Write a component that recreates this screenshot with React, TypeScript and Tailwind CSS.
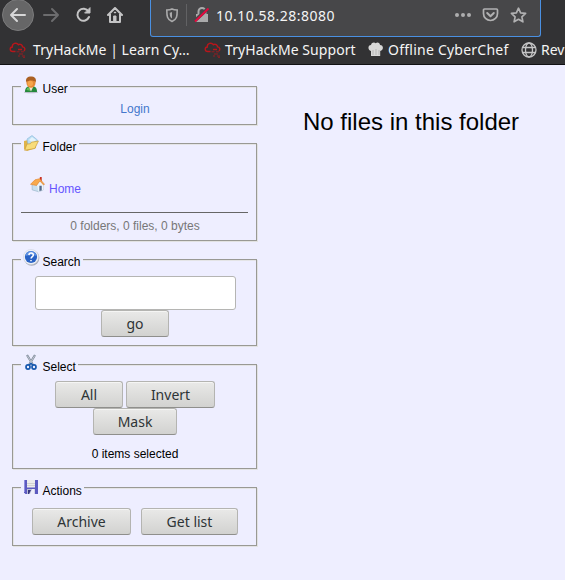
import React from "react";

const RedCloud = () => (
  <svg width="18" height="18" viewBox="0 0 18 18" fill="none" stroke="#b8161b" strokeWidth="1.4">
    <path d="M6.5 10.5H3.8C.4 10.5.5 6.2 3.3 6 3 2.300 7.500 1 9.300 3.700c2-1.300 4.300.1 4.200 2.200 2.500.1 3 2.600 1.500 4.100M9 8.500h4" />
    <path d="M7.500 10.800h3m1.500 0h3M10 13h4m-5 2h2m2 0h3M14 16.300h2" strokeWidth="1" opacity=".75" />
  </svg>
);

const UserIcon = () => (
  <svg width="16" height="18" viewBox="0 0 16 18">
    <ellipse cx="8" cy="16.300" rx="7" ry="1" fill="#b9bdc9" />
    <path d="M2 16c0-4 2-5.500 4-5.500h4c2.500 0 4 1.500 4 5.500z" fill="#25883b" />
    <path d="M3.500 14c.3-2 1.200-2.700 2.500-2.700L8 15z" fill="#63bd5b" />
    <path d="M5.700 10.500 8 15.500l2.400-5z" fill="#f7e5d0" />
    <ellipse cx="8" cy="6.500" rx="4.600" ry="5.200" fill="#e48a35" />
    <path d="M3 6C2.700 1.800 5 .6 8 .6s5.300 1.200 5 5.400c-2.700-2-7.100-2-10 0z" fill="#ab6022" />
    <ellipse cx="7.300" cy="7.500" rx="2.700" ry="2.800" fill="#f6a54c" />
  </svg>
);

const FolderIcon = () => (
  <svg width="16" height="18" viewBox="0 0 16 18">
    <path d="m1 6 4-1 1 1 6-2 1 9-9 3-3-2z" fill="#dfb34b" />
    <path d="m4 4 5-3.500L14.500 5 11 11 5 10z" fill="#b9dcf3" stroke="#87b7d7" strokeWidth=".6" />
    <path d="m6 5 3-3 4 3-3 3z" fill="#e4f3fc" />
    <path d="m1.700 15.300 2.200-6.200 3.500-.4 1-1.500 7-1.200-3.600 7.500z" fill="#f8dc7b" stroke="#c99c38" strokeWidth=".7" />
  </svg>
);

const HouseIcon = () => (
  <svg className="ml-px mt-px" width="15" height="16" viewBox="0 0 16 17">
    <path d="M10.500 0h2v5h-2z" fill="#c92e20" />
    <path d="m2.200 8 4.500-3L14 7.500v6.300l-4.700 1.900-7-2z" fill="#c9e0f0" stroke="#91adc2" strokeWidth=".6" />
    <path d="m7.500 8 3.200-4.400 3.500 4.500v5.600L9 15.600z" fill="#edf5fa" />
    <path d="M.5 7.800 5.300 3l5-1.300 5.200 6.100-1 .7-4-4.300L7 9z" fill="#f8aa4d" stroke="#df7c28" strokeWidth=".6" />
    <path d="M10 9.300h2.500v5L10 15z" fill="#53698b" />
  </svg>
);

const HelpIcon = () => (
  <svg width="18" height="18" viewBox="0 0 18 18">
    <circle cx="8.700" cy="9" r="7.700" fill="#a9adb9" />
    <circle cx="8" cy="8" r="7.600" fill="#eef0f5" stroke="#cdd1dc" strokeWidth=".5" />
    <circle cx="8" cy="8" r="6.100" fill="#2962c5" />
    <path d="M2.500 7C3 3.500 5 2.200 8 2.200s5 1.600 5.500 4.800C10 5.500 6 6 2.500 7z" fill="#5d91e3" />
    <path d="M5.900 6.100c.2-3 4.700-2.600 4.400 0-.1 1.500-2.200 1.500-2.200 3.400M8 10.900v1.400" fill="none" stroke="#fff" strokeWidth="1.500" />
  </svg>
);

const ScissorsIcon = () => (
  <svg width="16" height="18" viewBox="0 0 16 18" fill="none">
    <path d="m4 1 6 10M12 1 6 11" stroke="#7e8999" strokeWidth="2.200" />
    <path d="m4.200 1.500 5.500 9M11.800 1.500l-5.500 9" stroke="#d2d7df" strokeWidth=".8" />
    <ellipse cx="5" cy="13" rx="2" ry="2.200" stroke="#1758ae" strokeWidth="1.700" />
    <ellipse cx="11" cy="13" rx="2" ry="2.200" stroke="#1758ae" strokeWidth="1.700" />
    <path d="m6 11 2-1.500 2 1.500" stroke="#1758ae" strokeWidth="1.500" />
  </svg>
);

const DiskIcon = () => (
  <svg width="16" height="16" viewBox="0 0 16 16">
    <path d="M0 0h14v14H1.500L0 12.500z" fill="#5c5ac0" />
    <path d="M0 0h1v12H0z" fill="#8f8ee0" />
    <path d="M3 0h8v7.500H3z" fill="#ececec" />
    <path d="M3 3h8v1H3zM3 5h8v1H3z" fill="#d2d2d2" />
    <path d="M3 9h8v5H3z" fill="#b9bcd6" />
    <path d="M4 10h3l-2 4H4z" fill="#36367c" />
    <path d="M8 9h2.500v5H6z" fill="#eeeefa" />
  </svg>
);

type PanelProps = { title: string; icon: React.ReactNode; box: string; titlePad?: string; children: React.ReactNode };

const Panel = ({ title, icon, box, titlePad = "pt-[6px]", children }: PanelProps) => (
  <section className={`w-[245px] border border-[#999994] shadow-[1px_1px_0_#e2e2e2,inset_1px_1px_0_#e4e4e6] px-2 ${box}`}>
    <h2 className="-mt-[11px] flex h-[22px] w-fit bg-[#eeeeff] pr-[2px] text-[12px] leading-[14px]">
      <span className="w-[21.500px] shrink-0 pl-[2px]">{icon}</span>
      <span className={titlePad}>{title}</span>
    </h2>
    {children}
  </section>
);

const Button = ({ label, size }: { label: string; size: string }) => (
  <button
    className={`flex h-[27px] items-center justify-center rounded-[3px] border border-[#b4b4b1] border-b-[#8f8f8c] bg-linear-to-b from-[#e9e9e8] to-[#d2d2d0] font-['Noto_Sans',sans-serif] text-[14px] leading-[20px] text-[#2e3436] shadow-[inset_0_1px_0_#f5f5f4] ${size}`}
  >
    {label}
  </button>
);

export default function App() {
  return (
    <div className="h-[580px] w-[565px] overflow-hidden bg-[#eeeeff] font-['Liberation_Sans',Arial,sans-serif] text-[12px] text-black">
      <header className="h-[65px] border-b border-[#111113] bg-[#323234] font-['Noto_Sans',sans-serif] text-[#f5f5f5]">
        <div className="flex h-[37px] text-[#c4c4c5]">
          <div className="flex w-[150px] shrink-0">
            <div className="-mt-[1px] ml-[2px] flex size-8 shrink-0 items-center justify-center rounded-full border border-[#7b7b7c] bg-[#666667]">
              <svg width="18" height="16" viewBox="0 0 18 16" fill="none" stroke="#d7d7d8" strokeWidth="2" strokeLinecap="round" strokeLinejoin="round">
                <path d="M16 8H2m6-6L2 8l6 6" />
              </svg>
            </div>
            <svg className="mt-[7px] ml-[8px]" width="18" height="16" viewBox="0 0 18 16" fill="none" stroke="#6c6c6e" strokeWidth="2" strokeLinecap="round" strokeLinejoin="round">
              <path d="M2 8h14m-6-6 6 6-6 6" />
            </svg>
            <svg className="mt-[7px] ml-[15px]" width="17" height="16" viewBox="0 0 17 16" fill="none" stroke="currentColor" strokeWidth="2" strokeLinecap="round">
              <path d="M13.500 4.500A6 6 0 1 0 14 10" />
              <path d="M15 1v5h-5z" fill="currentColor" strokeWidth="1" strokeLinejoin="round" />
            </svg>
            <svg className="mt-[7px] ml-[14px]" width="18" height="16" viewBox="0 0 18 16" fill="none" stroke="currentColor" strokeWidth="2" strokeLinecap="round" strokeLinejoin="round">
              <path d="m2 8 7-7 7 7M4 7v8h10V7" />
              <path d="M8 9h2v6H8z" fill="currentColor" strokeWidth="1" />
              <path d="M8.500 5.500h1" strokeWidth="1.500" />
            </svg>
          </div>
          <div className="flex w-[391px] shrink-0 rounded-b-[3px] border border-t-0 border-[#4a90e2] bg-[#474749]">
            <svg className="mt-[8px] ml-[14px] shrink-0" width="14" height="15" viewBox="0 0 14 15" fill="none" stroke="#aaaaab" strokeWidth="1.600">
              <path d="M7 1c2 1 3.600 1 5.200 1 0 6-.2 9.300-5.200 11.500C2 11.300 1.800 8 1.800 2 3.400 2 5 2 7 1z" />
              <path d="M7 4v6.500C5 9 4.700 7.500 4.700 4.700 5.600 4.600 6.300 4.400 7 4z" fill="#aaaaab" stroke="none" />
            </svg>
            <span className="mt-1 ml-[7px] h-[22px] w-px shrink-0 bg-[#626264]" />
            <svg className="mt-[7px] ml-[7px] shrink-0" width="16" height="16" viewBox="0 0 16 16" fill="none">
              <path d="M4.500 7V4.500a3.500 3.500 0 0 1 7 0V7" stroke="#aaaaab" strokeWidth="2" />
              <path d="M2 7h12v8H2z" fill="#aaaaab" />
              <path d="m1 13.500 13-12" stroke="#474749" strokeWidth="3.500" />
              <path d="M1 14.500 14.500 1.500" stroke="#e5083e" strokeWidth="1.900" />
            </svg>
            <span className="mt-[6px] ml-[6px] w-[237px] shrink-0 text-[14px] leading-5 tracking-[0.5px] text-[#f5f5f5]">10.10.58.28:8080</span>
            <svg className="mt-[7px] ml-px shrink-0" width="18" height="16" viewBox="0 0 18 16" fill="#adadae">
              <circle cx="3" cy="8" r="2" /><circle cx="9" cy="8" r="2" /><circle cx="15" cy="8" r="2" />
            </svg>
            <svg className="mt-[7px] ml-[10px] shrink-0" width="17" height="16" viewBox="0 0 17 16" fill="none" stroke="#b1b1b2" strokeWidth="2" strokeLinecap="round" strokeLinejoin="round">
              <path d="M2.500 2h12q1 0 1 1v3.500a7 7 0 0 1-14 0V3q0-1 1-1z" strokeWidth="1.700" />
              <path d="m5.200 6 3.300 3.200L11.800 6" />
            </svg>
            <svg className="mt-[7px] ml-[11px] shrink-0" width="17" height="17" viewBox="0 0 17 17" fill="none" stroke="#b1b1b2" strokeWidth="1.700" strokeLinejoin="round">
              <path d="m8.500 1.200 2.100 4.600 5 .6-3.700 3.400 1 5-4.400-2.500-4.400 2.500 1-5-3.700-3.400 5-.6z" />
            </svg>
          </div>
        </div>
        <nav className="flex h-[26px] text-[14px] leading-[26px] whitespace-nowrap">
          <span className="ml-[9px] mt-[4px] w-6 shrink-0"><RedCloud /></span>
          <span className="w-[171px] shrink-0 tracking-[0.05px]">TryHackMe | Learn Cy…</span>
          <span className="mt-[4px] w-[21px] shrink-0"><RedCloud /></span>
          <span className="w-[143px] shrink-0 tracking-[0.07px]">TryHackMe Support</span>
          <svg className="mt-[5px] mr-[5px] shrink-0" width="15" height="15" viewBox="0 0 15 15">
            <path d="M3 14V9C-.5 8-.3 3 3 3c.7-3 3.700-3 4.700-1.700C9.500-.3 12 1 12 3c3.700 0 4 4.700.2 6v5z" fill="#d8d8d8" />
            <path d="M5 8v5m3-6v6m3-5v5" stroke="#aaa" strokeWidth=".7" />
          </svg>
          <span className="w-[133px] shrink-0 tracking-[0.24px]">Offline CyberChef</span>
          <svg className="mt-[5px] mr-[4px] shrink-0" width="16" height="16" viewBox="0 0 16 16" fill="none" stroke="#c5c5c6" strokeWidth="1.300">
            <circle cx="8" cy="8" r="7" /><ellipse cx="8" cy="8" rx="3.500" ry="7" /><path d="M1.500 5.500h13M1.500 10.500h13" />
          </svg>
          <span>Rev</span>
        </nav>
      </header>

      <main className="flex">
        <aside className="ml-3 w-[246px] shrink-0 pt-[21px]">
          <Panel title="User" icon={<UserIcon />} box="h-[39px]">
            <a className="-mt-[5px] block pl-px text-center leading-[32px] text-[#4477cc]">Login</a>
          </Panel>
          <Panel title="Folder" titlePad="pt-[7px]" icon={<span className="mt-[2px] block"><FolderIcon /></span>} box="mt-[18px] h-[98px]">
            <div className="flex h-[58px] border-b border-[#666666] pt-[21px] pl-[8px]">
              <HouseIcon />
              <a className="mt-[6px] ml-[4px] leading-[14px] text-[#6655ff]">Home</a>
            </div>
            <p className="pt-[6px] pl-px text-center leading-[14px] text-[#777777]">0 folders, 0 files, 0 bytes</p>
          </Panel>
          <Panel title="Search" icon={<span className="block"><HelpIcon /></span>} box="mt-[18px] h-[87px]">
            <div className="mt-[5px] ml-[14px] h-[34px] w-[201px] rounded-[3px] border border-[#b5b5b3] bg-white" />
            <div className="ml-[80px]"><Button label="go" size="w-[68px]" /></div>
          </Panel>
          <Panel title="Select" icon={<span className="block"><ScissorsIcon /></span>} box="mt-[18px] h-[105px]">
            <div className="mt-[5px] ml-[34px] flex gap-[3px]">
              <Button label="All" size="w-[68px]" />
              <Button label="Invert" size="w-[89px]" />
            </div>
            <div className="ml-[72px]"><Button label="Mask" size="w-[84px]" /></div>
            <p className="pt-[12px] pl-px text-center leading-[14px]">0 items selected</p>
          </Panel>
          <Panel title="Actions" titlePad="pt-[7px]" icon={<span className="mt-[3px] ml-px block"><DiskIcon /></span>} box="mt-[18px] h-[59px]">
            <div className="mt-[9px] ml-[11px] flex gap-[10px]">
              <Button label="Archive" size="w-[99px]" />
              <Button label="Get list" size="w-[97px]" />
            </div>
          </Panel>
        </aside>
        <p className="mt-[43px] ml-[45px] text-[24px] leading-7 whitespace-nowrap">No files in this folder</p>
      </main>
    </div>
  );
}
